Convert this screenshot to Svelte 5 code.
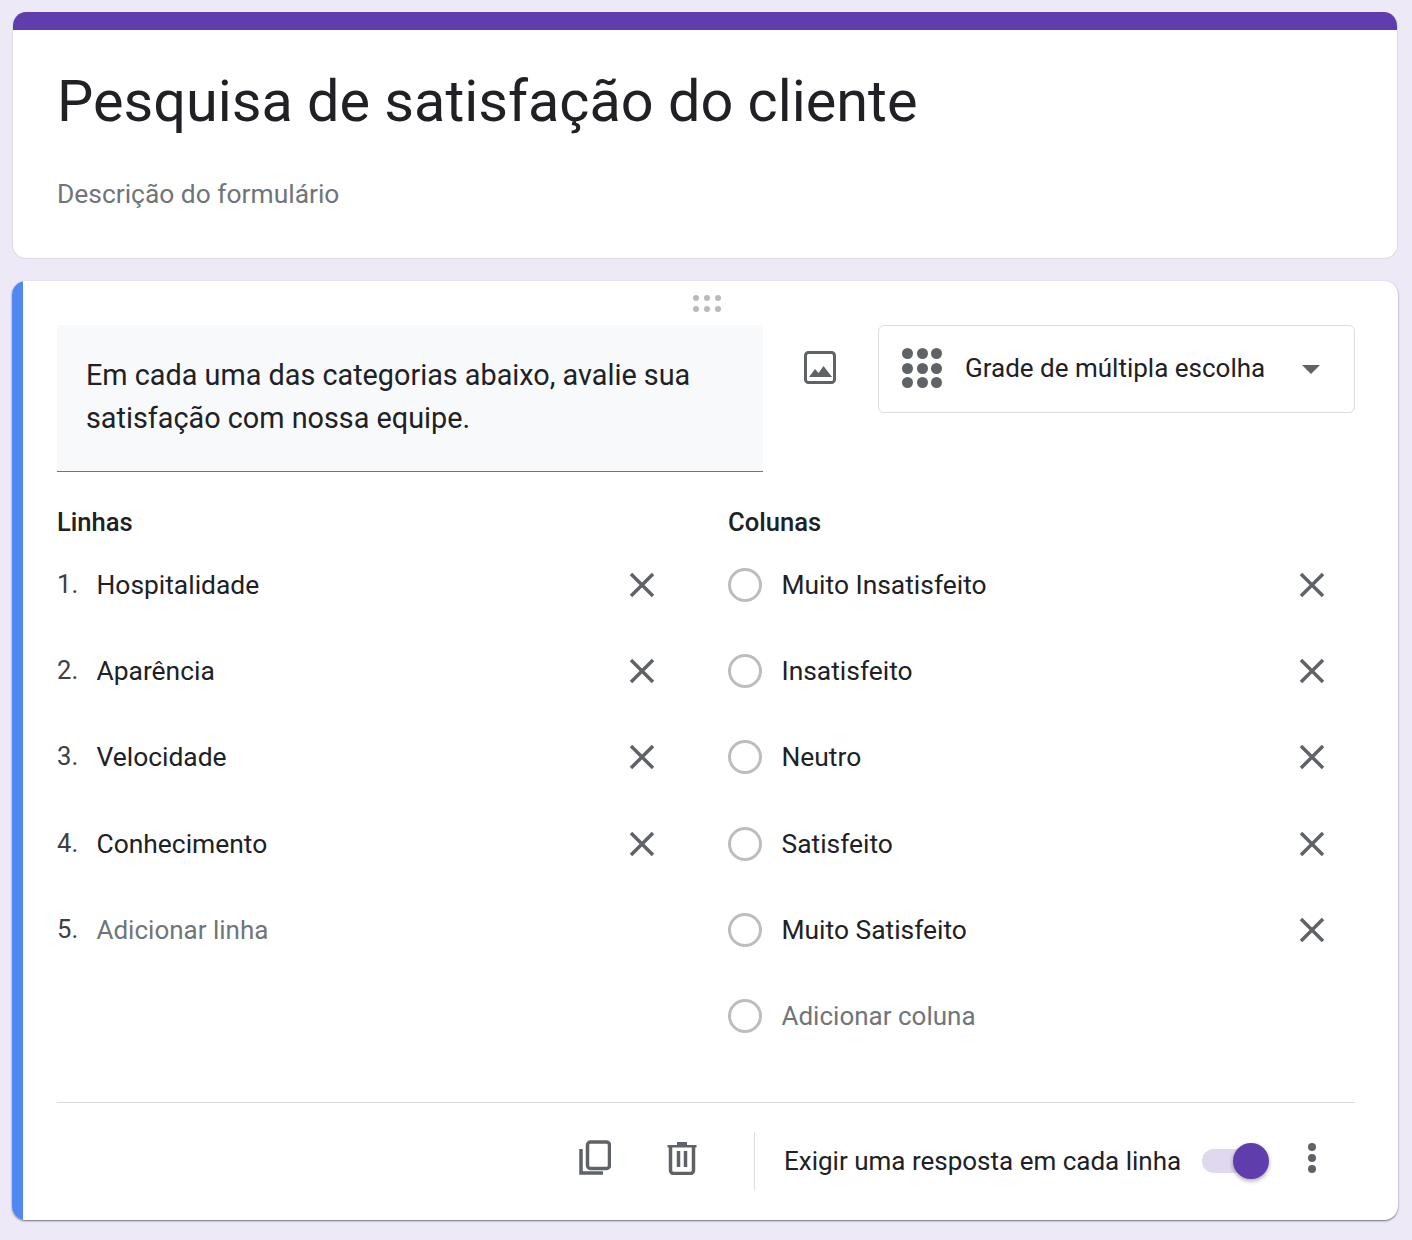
<script>
	const lines = ['Hospitalidade', 'Aparência', 'Velocidade', 'Conhecimento'];
	const columns = ['Muito Insatisfeito', 'Insatisfeito', 'Neutro', 'Satisfeito', 'Muito Satisfeito'];
</script>

{#snippet close()}
	<svg class="close" viewBox="0 0 28 28" width="28" height="28">
		<path d="M3 3 L25 25 M25 3 L3 25" stroke="#5f6368" stroke-width="3.5" fill="none" />
	</svg>
{/snippet}

<div class="page">
	<section class="card header-card">
		<div class="accent-top"></div>
		<h1 class="title">Pesquisa de satisfação do cliente</h1>
		<p class="description">Descrição do formulário</p>
	</section>

	<section class="card question-card">
		<div class="accent-left"></div>
		<div class="drag">
			{#each Array(6) as _}
				<span class="drag-dot"></span>
			{/each}
		</div>

		<div class="top-row">
			<div class="question-box">Em cada uma das categorias abaixo, avalie sua satisfação com nossa equipe.</div>
			<div class="image-btn">
				<svg viewBox="0 0 34 34" width="34" height="34">
					<rect x="2.5" y="2.5" width="29" height="30" rx="3" fill="none" stroke="#5f6368" stroke-width="3" />
					<path d="M6 27 L12 19 L15.5 23 L20.500 16 L29 27 Z" fill="#5f6368" />
				</svg>
			</div>
			<div class="type-select">
				<div class="grid-icon">
					{#each Array(9) as _}
						<span class="grid-dot"></span>
					{/each}
				</div>
				<span class="type-label">Grade de múltipla escolha</span>
				<span class="caret"></span>
			</div>
		</div>

		<div class="columns">
			<div class="col col-left">
				<h2 class="col-title">Linhas</h2>
				{#each lines as line, i}
					<div class="row">
						<span class="num">{i + 1}.</span>
						<span class="row-text">{line}</span>
						{@render close()}
					</div>
				{/each}
				<div class="row">
					<span class="num">5.</span>
					<span class="row-text muted">Adicionar linha</span>
				</div>
			</div>

			<div class="col col-right">
				<h2 class="col-title">Colunas</h2>
				{#each columns as column}
					<div class="row">
						<span class="radio"></span>
						<span class="row-text">{column}</span>
						{@render close()}
					</div>
				{/each}
				<div class="row">
					<span class="radio"></span>
					<span class="row-text muted">Adicionar coluna</span>
				</div>
			</div>
		</div>

		<div class="footer">
			<svg class="copy" viewBox="0 0 32 36" width="32" height="36">
				<path d="M2 9 V33 H24" fill="none" stroke="#5f6368" stroke-width="3.500" />
				<rect x="8.500" y="2" width="22" height="26.500" rx="3" fill="none" stroke="#5f6368" stroke-width="3.500" />
			</svg>
			<svg class="trash" viewBox="0 0 30 34" width="30" height="34">
				<path d="M0.500 4 H29.500 V6.500 H0.500 Z M10 1 H20 V4 H10 Z" fill="#5f6368" />
				<path d="M3.500 5 V29.500 A3 3 0 0 0 6.500 32.500 H23.500 A3 3 0 0 0 26.500 29.500 V5" fill="none" stroke="#5f6368" stroke-width="3.500" />
				<path d="M11.500 10 V26 M18.500 10 V26" stroke="#5f6368" stroke-width="3.500" />
			</svg>
			<span class="divider"></span>
			<span class="required">Exigir uma resposta em cada linha</span>
			<span class="switch"><span class="knob"></span></span>
			<span class="more">
				<span class="more-dot"></span>
				<span class="more-dot"></span>
				<span class="more-dot"></span>
			</span>
		</div>
	</section>
</div>

<style>
	:global(body) {
		background: #ede9f6;
		font-family: Roboto, 'Liberation Sans', sans-serif;
	}

	.page {
		display: flex;
		flex-direction: column;
		gap: 22px;
		padding: 12px 14px 19px 12px;
		height: 1240px;
		box-sizing: border-box;
	}

	.card {
		position: relative;
		background: #fff;
		border-radius: 14px;
		overflow: hidden;
		box-sizing: border-box;
	}

	.header-card {
		height: 247px;
		border: 1px solid #dadce0;
		border-top: none;
		padding: 0 44px;
	}

	.accent-top {
		height: 18px;
		margin: 0 -45px;
		background: #5f3dad;
	}

	.title {
		margin: 37px 0 0;
		font-size: 57.6px;
		font-weight: 400;
		line-height: 70px;
		color: #202124;
	}

	.description {
		margin: 41px 0 0;
		font-size: 26.4px;
		line-height: 32px;
		color: #70757a;
	}

	.question-card {
		height: 939px;
		padding: 44px 43px 0 45px;
		box-shadow: 0 1px 2px rgba(60, 64, 67, 0.7);
	}

	.accent-left {
		position: absolute;
		left: 0;
		top: 0;
		bottom: 0;
		width: 11px;
		background: #5087f0;
	}

	.drag {
		position: absolute;
		top: 14px;
		left: 681px;
		display: grid;
		grid-template-columns: repeat(3, 6px);
		gap: 5px;
	}

	.drag-dot {
		width: 6px;
		height: 6px;
		border-radius: 50%;
		background: #b8babd;
	}

	.top-row {
		display: flex;
		align-items: flex-start;
	}

	.question-box {
		box-sizing: border-box;
		width: 706px;
		height: 147px;
		padding: 29px 29px;
		background: #f8f9fa;
		border-bottom: 1px solid #70757a;
		font-size: 28.8px;
		line-height: 43px;
		color: #202124;
	}

	.image-btn {
		display: flex;
		width: 115px;
		justify-content: center;
		padding: 25px 2px 0 0;
		box-sizing: border-box;
	}

	.type-select {
		flex: 1;
		display: flex;
		align-items: center;
		height: 88px;
		box-sizing: border-box;
		padding: 0 34px 2px 23px;
		border: 1px solid #dadce0;
		border-radius: 6px;
	}

	.grid-icon {
		display: grid;
		grid-template-columns: repeat(3, 11px);
		gap: 3.500px;
		margin-right: 23px;
	}

	.grid-dot {
		width: 11px;
		height: 11px;
		border-radius: 50%;
		background: #5f6368;
	}

	.type-label {
		flex: 1;
		font-size: 26px;
		color: #202124;
	}

	.caret {
		width: 0;
		height: 0;
		margin-top: 3px;
		border-left: 9px solid transparent;
		border-right: 9px solid transparent;
		border-top: 9px solid #5f6368;
	}

	.columns {
		display: grid;
		grid-template-columns: 671px 1fr;
		margin-top: 33px;
		height: 597px;
		border-bottom: 1px solid #dadce0;
	}

	.col-title {
		margin: 0 0 2.5px;
		font-size: 25.6px;
		font-weight: 500;
		line-height: 34px;
		color: #202124;
	}

	.row {
		display: flex;
		align-items: center;
		height: 86.350px;
		font-size: 26.4px;
		color: #202124;
	}

	.col-left .row {
		padding-right: 72.5px;
	}

	.col-right .row {
		padding-right: 29.5px;
	}

	.num {
		width: 39.5px;
		margin-bottom: 2px;
		font-size: 25.6px;
		color: #3c4043;
	}

	.row-text {
		flex: 1;
	}

	.muted {
		font-size: 26px;
		color: #70757a;
	}

	.close {
		flex: none;
	}

	.radio {
		width: 34px;
		height: 34px;
		box-sizing: border-box;
		margin-right: 19.5px;
		border: 3px solid #bdbdbd;
		border-radius: 50%;
	}

	.footer {
		display: flex;
		align-items: center;
		height: 115px;
		padding-left: 522px;
	}

	.copy {
		margin-top: -6px;
	}

	.trash {
		margin: -6px 0 0 56px;
	}

	.divider {
		width: 1px;
		height: 58px;
		margin: 0 29px 0 57px;
		background: #dadce0;
	}

	.required {
		font-size: 26px;
		color: #202124;
	}

	.switch {
		position: relative;
		width: 52px;
		height: 24px;
		margin-left: 21px;
		border-radius: 12px;
		background: #dfd8ee;
	}

	.knob {
		position: absolute;
		top: -6px;
		right: -15px;
		width: 36px;
		height: 36px;
		border-radius: 50%;
		background: #5f3dad;
		box-shadow: 0 2px 4px rgba(0, 0, 0, 0.35);
	}

	.more {
		display: flex;
		flex-direction: column;
		gap: 3px;
		margin: -6px 0 0 53.5px;
	}

	.more-dot {
		width: 8px;
		height: 8px;
		border-radius: 50%;
		background: #5f6368;
	}
</style>
